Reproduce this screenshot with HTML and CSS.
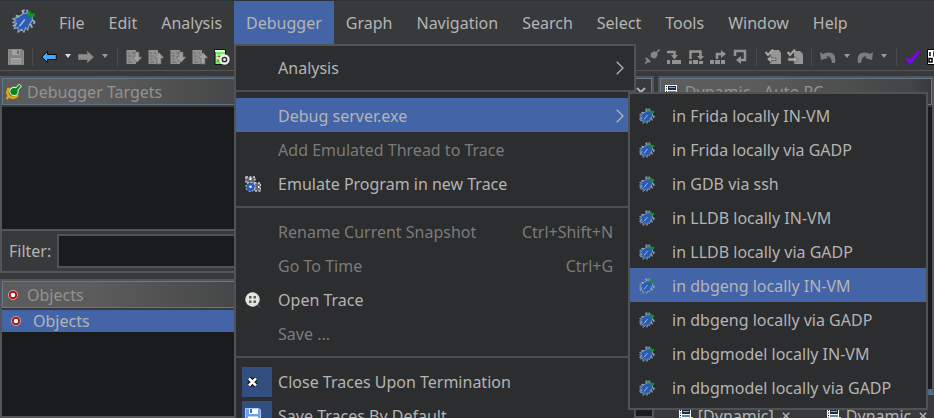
FILE: index.html
```html
<!DOCTYPE html>
<html lang="en">
<head>
<meta charset="utf-8">
<title>Debugger</title>
<link rel="stylesheet" href="styles.css">
</head>
<body>
<svg class="sprite" aria-hidden="true">
  <symbol id="bug" viewBox="0 0 16 16">
    <path d="M5 5 L2.500 4.500 M8 4 L7 1.300 L8.500 0.800 M10.500 3 L10 0.500 M13 7 L15 8.500 L14.500 10 M12 9.500 L13.500 12.500 M3 10 L0.500 11.500" fill="none" stroke="#93a8c4" stroke-width="1.300"/>
    <path d="M0.500 6.500 L4 5.500 L7.500 3 L11 2.500 L13.500 4.500 L13.500 7.500 L11.500 10.500 L10.500 14 L9 12.500 L8 15.500 L6.500 13.500 L4 15.500 L4 12.500 L1.500 13 L3 9.500 L0.500 9 L2.500 7.500 Z" fill="#2a5db2" stroke="#93a8c4" stroke-width="0.700"/>
    <path d="M8.500 7 L5 11.500" stroke="#a9bfe2" stroke-width="0.900"/>
    <path d="M10.500 1.500 H12.500 V3 H15.200 V5 H13.500 V6 H12 V4.500 H10.500 Z" fill="#0b9a18"/>
  </symbol>
  <symbol id="disk" viewBox="0 0 16 16">
    <path d="M0.500 0.500 H14 L15.500 2 V15.500 H0.500 Z" fill="#858585" stroke="#8d8d8d"/>
    <path d="M4 1 H12 V6 H4 Z M3 9 H13 V15 H3 Z" fill="#a2a2a2"/>
    <path d="M9 1.500 H11 V5 H9 Z" fill="#6e6e6e"/><path d="M4 11.500 H12 M4 13.500 H12" stroke="#8c8c8c"/>
  </symbol>
  <symbol id="disk-blue" viewBox="0 0 16 16">
    <path d="M0.500 0.500 H14 L15.500 2 V15.500 H0.500 Z" fill="#6da0ec" stroke="#a9c8f8"/>
    <path d="M4 1 H13 V6 H4 Z M3 9 H13 V15 H3 Z" fill="#fff"/><path d="M5 1 H7 V5 H5 Z" fill="#3b6fc4"/><path d="M3 8.500 H13" stroke="#b9d2fa"/>
  </symbol>
  <symbol id="back" viewBox="0 0 16 16"><path d="M0.700 8 L6.500 2.500 V5.500 H15.300 V10.500 H6.500 V13.500 Z" fill="#46a9f8" stroke="#0a0a0a"/></symbol>
  <symbol id="forward" viewBox="0 0 16 16"><path d="M15.500 8 L9.500 2.500 V5.500 H0.500 V10.500 H9.500 V13.500 Z" fill="#8d8d8d" stroke="#787878"/></symbol>
  <symbol id="page-down" viewBox="0 0 16 16">
    <path d="M0.500 1 H10 V15 H0.500 Z" fill="#919191"/><path d="M2 4 H4 M6 4 H9 M2 7 H5 M2 10 H4 M2 13 H6" stroke="#686868"/>
    <path d="M9 3 H13 V8 H16 L11 13.500 L6 8 H9 Z" fill="#a0a0a0" stroke="#6c6c6c" stroke-width="0.700"/>
  </symbol>
  <symbol id="page-up" viewBox="0 0 16 16">
    <path d="M0.500 1 H10 V15 H0.500 Z" fill="#919191"/><path d="M2 4 H4 M6 4 H8 M2 7 H5 M2 10 H4 M2 13 H6" stroke="#686868"/>
    <path d="M9 15 H13 V9 H16 L11 3.500 L6 9 H9 Z" fill="#a0a0a0" stroke="#6c6c6c" stroke-width="0.700"/>
  </symbol>
  <symbol id="page-rec" viewBox="0 0 16 16">
    <path d="M1 0.500 H11.500 V15.500 H1 Z" fill="#71ee66" stroke="#111"/><path d="M1 1 H11 V3 H1 Z" fill="#d8ffd0"/>
    <path d="M2 6 H4 M6 6 H10 M2 9 H5" stroke="#fff"/><path d="M4 7.500 H6 M3 12 H5" stroke="#d22"/>
    <circle cx="10.500" cy="10.500" r="4" fill="#222" stroke="#eee" stroke-width="2.300"/><circle cx="10.500" cy="10.500" r="1.600" fill="#ddd"/>
  </symbol>
  <symbol id="plug" viewBox="0 0 16 16">
    <path d="M7 4 L10.500 2 L14 5 L12 9 L9 9.500 L6.500 7.500 Z" fill="#858585"/><path d="M12 4 L15.500 0.500" stroke="#858585" stroke-width="1.500"/>
    <path d="M1 8.500 L3.500 9 L6.500 12 L6 14 L4 13 L2 15 L0.500 14 L2.500 12 Z" fill="#858585"/>
  </symbol>
  <symbol id="step-into" viewBox="0 0 16 16"><path d="M1 3 H8.500 V8" fill="none" stroke="#929292" stroke-width="2.500"/><path d="M5 6 H12 L8.500 10.500 Z M1 11 H4 V15 H1 Z M6 11 H15 V15 H6 Z" fill="#929292"/></symbol>
  <symbol id="step-over" viewBox="0 0 16 16"><path d="M2.500 10 V2.500 H12.500 V7" fill="none" stroke="#929292" stroke-width="2.500"/><path d="M9 7 H16 L12.500 11 Z M1 11.500 H4 V15 H1 Z M5 11 H10 V15 H5 Z M11 12 H15 V15 H11 Z" fill="#929292"/></symbol>
  <symbol id="step-out" viewBox="0 0 16 16"><path d="M7 10 V5 H12" fill="none" stroke="#929292" stroke-width="2.500"/><path d="M11 1 L16 5 L11 9 Z M0 11 H4 V15 H0 Z M5 11 H10 V15 H5 Z M11 11 H15 V15 H11 Z" fill="#929292"/></symbol>
  <symbol id="step-last" viewBox="0 0 16 16"><path d="M3 7 V2 H13 V11 H8" fill="none" stroke="#929292" stroke-width="2.500"/><path d="M9 7 V15 L4 11 Z" fill="#929292"/></symbol>
  <symbol id="copy-in" viewBox="0 0 16 16"><path d="M6 1 H14 L16 4 V15 H5 V8 Z" fill="#969696"/><path d="M0.500 3 L3 6 L8 0.500" stroke="#a8a8a8" stroke-width="2" fill="none"/><path d="M2 10 L6 6.500 V9 H11 V11.500 H6 V14 Z" fill="#aaa" stroke="#555" stroke-width="0.700"/></symbol>
  <symbol id="copy-out" viewBox="0 0 16 16"><path d="M7 2 H13 L16 5 V15 H7 Z" fill="#969696"/><path d="M0.500 3 L3 6 L8 0.500" stroke="#a8a8a8" stroke-width="2" fill="none"/><path d="M11 10.500 L7 7 V9 H1 V12 H7 V14.500 Z" fill="#aaa" stroke="#555" stroke-width="0.700"/></symbol>
  <symbol id="undo" viewBox="0 0 16 16"><path d="M0 3 L1 11 L8 9 L6 7.500 Q11 6 12 14 H15 Q17 3 8 3.500 Q5 3.500 3 5 Z" fill="#7d7d7d"/></symbol>
  <symbol id="redo" viewBox="0 0 16 16"><path d="M16 3 L15 11 L8 9 L10 7.500 Q5 6 4 14 H1 Q-1 3 8 3.500 Q11 3.500 13 5 Z" fill="#7d7d7d"/></symbol>
  <symbol id="check" viewBox="0 0 16 16"><path d="M2 9 L5 13.500 L14 2" stroke="#8200ff" stroke-width="2.800" fill="none"/></symbol>
  <symbol id="bits" viewBox="0 0 16 16"><path d="M0.500 0.500 H15.500 V15.500 H0.500 Z" fill="#fff" stroke="#000"/><path d="M3 3 V7 M2 9.500 H5 V13 H2 Z M7 3 H10 V7 H7 Z M8 9 V13" stroke="#000" stroke-width="1.500" fill="none"/></symbol>
  <symbol id="target" viewBox="0 0 16 16">
    <path d="M3 5 Q-0.500 9 3.500 12.500 Q8 16 12 11 M3 12 L0.500 15 M1 5 L4 5" fill="none" stroke="#dca816" stroke-width="2.500"/>
    <circle cx="8" cy="7.500" r="4.700" fill="#d8f1d2"/><path d="M9 7 L14.500 1" stroke="#d8f1d2" stroke-width="4"/><circle cx="8" cy="7.500" r="3.600" fill="#078516"/><path d="M8 8 L14 1.500" stroke="#078516" stroke-width="2"/>
  </symbol>
  <symbol id="object" viewBox="0 0 10 10"><circle cx="5" cy="5" r="3.300" fill="#fff" stroke="#b50b0b" stroke-width="2"/><circle cx="5" cy="5" r="4.600" fill="none" stroke="#e5c9c9" stroke-width="0.700"/></symbol>
  <symbol id="listing" viewBox="0 0 16 16"><path d="M1 1 H13 V15 H1 Z" fill="#f2f5f5"/><path d="M2.500 2 V14" stroke="#222" stroke-dasharray="1 1.500"/><path d="M4 2 H12 V6 H4 Z" fill="#182c47"/><path d="M5 3.500 H11" stroke="#7db0d5"/><path d="M4 8 H12 M4 11 H12" stroke="#32657e" stroke-width="1.500"/><path d="M11 9 H15 V13 H11 Z" fill="#e7d89e"/></symbol>
  <symbol id="emulate" viewBox="0 0 16 16">
    <path d="M0.500 1 H10 V7 H0.500 Z" fill="#666"/><path d="M1 1 H10 V7 H1 Z M9.500 7 H15.500 V15 H9.500 Z" fill="#666" stroke="#d4d4d4" stroke-width="1.300" stroke-dasharray="2 1.500"/>
    <circle cx="5.500" cy="10.800" r="4.600" fill="#2a5ab2" stroke="#c4d6ff" stroke-dasharray="2 1.500"/><circle cx="5.500" cy="10.800" r="1.300" fill="#fff"/><path d="M4.500 2 H6.500 V4 H4.500 Z M13 10 H14.500 V12 H13 Z" fill="#fff"/>
  </symbol>
  <symbol id="reel" viewBox="0 0 16 16"><path d="M11 12 L15.500 15.500" stroke="#444" stroke-width="2"/><circle cx="7.500" cy="7.500" r="7.200" fill="#e3e6df"/><path d="M4 4 H6.500 V6.500 H4 Z M8.500 4 H11 V6.500 H8.500 Z M4 8.500 H6.500 V11 H4 Z M8.500 8.500 H11 V11 H8.500 Z" fill="#5a5e58"/></symbol>
  <symbol id="cross" viewBox="0 0 16 16"><path d="M4 4.500 L11 11.500 M11 4.500 L4 11.500" stroke="#111" stroke-width="5"/><path d="M4 4.500 L11 11.500 M11 4.500 L4 11.500" stroke="#fff" stroke-width="2.600"/></symbol>
  <symbol id="chevron" viewBox="0 0 8 14"><path d="M0.700 0.700 L7 7 L0.700 13.300" fill="none" stroke="currentColor" stroke-width="1.300"/></symbol>
  <symbol id="close" viewBox="0 0 10 10"><path d="M1 1 L9 9 M9 1 L1 9" stroke="#b4b4b4" stroke-width="1.800"/></symbol>
</svg>

<nav class="menubar" aria-label="Main menu">
  <svg class="app-icon"><use href="#bug"/></svg>
  <button class="menu-title">File</button>
  <button class="menu-title">Edit</button>
  <button class="menu-title">Analysis</button>
  <div class="menu-host">
    <button class="menu-title open" aria-expanded="true">Debugger</button>
    <div class="menu dropdown" role="menu">
      <button class="item" role="menuitem"><span class="slot"></span><span class="label">Analysis</span><svg class="chevron"><use href="#chevron"/></svg></button>
      <hr>
      <div class="submenu-host">
        <button class="item selected" role="menuitem" aria-expanded="true"><span class="slot"></span><span class="label">Debug server.exe</span><svg class="chevron"><use href="#chevron"/></svg></button>
        <div class="menu submenu" role="menu">
          <button class="item" role="menuitem"><svg class="icon"><use href="#bug"/></svg><span class="label">in Frida locally IN-VM</span></button>
          <button class="item" role="menuitem"><svg class="icon"><use href="#bug"/></svg><span class="label">in Frida locally via GADP</span></button>
          <button class="item" role="menuitem"><svg class="icon"><use href="#bug"/></svg><span class="label">in GDB via ssh</span></button>
          <button class="item" role="menuitem"><svg class="icon"><use href="#bug"/></svg><span class="label">in LLDB locally IN-VM</span></button>
          <button class="item" role="menuitem"><svg class="icon"><use href="#bug"/></svg><span class="label">in LLDB locally via GADP</span></button>
          <button class="item selected" role="menuitem"><svg class="icon"><use href="#bug"/></svg><span class="label">in dbgeng locally IN-VM</span></button>
          <button class="item" role="menuitem"><svg class="icon"><use href="#bug"/></svg><span class="label">in dbgeng locally via GADP</span></button>
          <button class="item" role="menuitem"><svg class="icon"><use href="#bug"/></svg><span class="label">in dbgmodel locally IN-VM</span></button>
          <button class="item" role="menuitem"><svg class="icon"><use href="#bug"/></svg><span class="label">in dbgmodel locally via GADP</span></button>
        </div>
      </div>
      <button class="item" role="menuitem" disabled><span class="slot"></span><span class="label">Add Emulated Thread to Trace</span></button>
      <button class="item" role="menuitem"><span class="slot"><svg class="icon"><use href="#emulate"/></svg></span><span class="label">Emulate Program in new Trace</span></button>
      <hr>
      <button class="item" role="menuitem" disabled><span class="slot"></span><span class="label">Rename Current Snapshot</span><span class="keys">Ctrl+Shift+N</span></button>
      <button class="item" role="menuitem" disabled><span class="slot"></span><span class="label">Go To Time</span><span class="keys">Ctrl+G</span></button>
      <button class="item" role="menuitem"><span class="slot"><svg class="icon"><use href="#reel"/></svg></span><span class="label">Open Trace</span></button>
      <button class="item" role="menuitem" disabled><span class="slot"></span><span class="label">Save ...</span></button>
      <hr>
      <button class="item" role="menuitemcheckbox" aria-checked="true"><span class="slot checked"><svg class="icon"><use href="#cross"/></svg></span><span class="label">Close Traces Upon Termination</span></button>
      <button class="item" role="menuitemcheckbox" aria-checked="true"><span class="slot checked"><svg class="icon"><use href="#disk-blue"/></svg></span><span class="label">Save Traces By Default</span></button>
    </div>
  </div>
  <button class="menu-title">Graph</button>
  <button class="menu-title">Navigation</button>
  <button class="menu-title">Search</button>
  <button class="menu-title">Select</button>
  <button class="menu-title">Tools</button>
  <button class="menu-title">Window</button>
  <button class="menu-title">Help</button>
</nav>

<div class="toolbar" role="toolbar" aria-label="Tools">
  <div class="tools">
    <button class="tool" aria-label="Save"><svg class="icon"><use href="#disk"/></svg></button>
    <span class="divider"></span>
    <button class="tool" aria-label="Back"><svg class="icon"><use href="#back"/></svg><span class="caret lit"></span></button>
    <button class="tool" aria-label="Forward"><svg class="icon"><use href="#forward"/></svg><span class="caret"></span></button>
    <span class="divider"></span>
    <button class="tool" aria-label="Next page"><svg class="icon"><use href="#page-down"/></svg></button>
    <button class="tool" aria-label="Previous page"><svg class="icon"><use href="#page-up"/></svg></button>
    <button class="tool" aria-label="Import"><svg class="icon"><use href="#page-down"/></svg></button>
    <button class="tool" aria-label="Export"><svg class="icon"><use href="#page-up"/></svg></button>
    <button class="tool" aria-label="Record"><svg class="icon"><use href="#page-rec"/></svg></button>
  </div>
  <div class="tools">
    <button class="tool" aria-label="Disconnect"><svg class="icon"><use href="#plug"/></svg></button>
    <button class="tool" aria-label="Step into"><svg class="icon"><use href="#step-into"/></svg></button>
    <button class="tool" aria-label="Step over"><svg class="icon"><use href="#step-over"/></svg></button>
    <button class="tool" aria-label="Step out"><svg class="icon"><use href="#step-out"/></svg></button>
    <button class="tool" aria-label="Step last"><svg class="icon"><use href="#step-last"/></svg></button>
    <span class="divider"></span>
    <button class="tool" aria-label="Copy in"><svg class="icon"><use href="#copy-in"/></svg></button>
    <button class="tool" aria-label="Copy out"><svg class="icon"><use href="#copy-out"/></svg></button>
    <span class="divider"></span>
    <button class="tool" aria-label="Undo"><svg class="icon"><use href="#undo"/></svg><span class="caret"></span></button>
    <button class="tool" aria-label="Redo"><svg class="icon"><use href="#redo"/></svg><span class="caret"></span></button>
    <span class="divider"></span>
    <button class="tool" aria-label="Validate"><svg class="icon"><use href="#check"/></svg></button>
    <button class="tool" aria-label="Bytes"><svg class="icon"><use href="#bits"/></svg></button>
  </div>
</div>

<main class="workspace">
  <div class="left">
    <section class="panel targets">
      <header class="panel-head"><svg class="icon"><use href="#target"/></svg><h2>Debugger Targets</h2><button class="close" aria-label="Close"><svg><use href="#close"/></svg></button></header>
      <div class="panel-body"></div>
      <div class="filter"><label for="filter">Filter:</label><input id="filter" type="text"></div>
    </section>
    <section class="panel objects">
      <header class="panel-head"><svg class="dot"><use href="#object"/></svg><h2>Objects</h2></header>
      <div class="panel-body"><div class="tree-row"><svg class="dot"><use href="#object"/></svg><span>Objects</span></div></div>
    </section>
  </div>
  <div class="right">
    <section class="panel dynamic">
      <header class="panel-head"><svg class="icon"><use href="#listing"/></svg><h2>Dynamic - Auto PC</h2></header>
      <div class="panel-body"></div>
    </section>
    <div class="tabs">
      <button class="tab"><svg class="icon"><use href="#listing"/></svg><span>[Dynamic]</span><svg class="tab-close"><use href="#close"/></svg></button>
      <button class="tab"><svg class="icon"><use href="#listing"/></svg><span>Dynamic</span><svg class="tab-close"><use href="#close"/></svg></button>
    </div>
  </div>
</main>
</body>
</html>
```
FILE: styles.css
```css
* { box-sizing: border-box; }

body {
  margin: 0;
  height: 100vh;
  overflow: hidden;
  display: flex;
  flex-direction: column;
  background: #37393b;
  color: #b4b4b4;
  font: 16px/24px "Noto Sans", sans-serif;
}

button {
  margin: 0;
  padding: 0;
  border: 0;
  background: none;
  color: inherit;
  font: inherit;
  text-align: left;
}

.sprite { display: none; }
.icon { width: 16px; height: 16px; flex: none; }

.menubar {
  display: flex;
  flex: none;
  height: 44px;
  padding-left: 12px;
  border-top: 1px solid #2c343b;
}
.app-icon { width: 24px; height: 24px; flex: none; margin: 8px 11px 0 0; }
.menu-title { height: 43px; padding: 0 12px; flex: none; }
.menu-title.open { background: #4464a8; }
.menu-host, .submenu-host { position: relative; }

.menu {
  position: absolute;
  z-index: 2;
  padding: 4px 0;
  border: 2px solid #505354;
  background: #2b2d2e;
}
.dropdown { top: 43px; left: 0; width: 402px; }
.submenu { top: -6px; left: 392px; width: 300px; z-index: 3; }

.item {
  display: flex;
  align-items: center;
  width: 100%;
  height: 34px;
  padding: 2px 8px 0 6px;
}
.item:disabled { color: #7b7b7b; }
.item.selected { background: #4464a8; }
.label { flex: 1; white-space: nowrap; }
.slot {
  display: flex;
  align-items: center;
  width: 30px;
  height: 30px;
  margin-right: 6px;
  padding-left: 3px;
}
.slot.checked { background: #334f82; }
.keys { padding-right: 13px; }
.chevron { width: 8px; height: 14px; margin-right: 2px; }
.submenu .item { padding-left: 9px; }
.submenu .icon { margin-right: 17px; }

hr {
  height: 2px;
  margin: 6px 0;
  border: 0;
  background: #4b4d4f;
}

.toolbar {
  display: flex;
  flex: none;
  gap: 414px;
  height: 27px;
  padding: 0 8px;
  border-bottom: 1px solid #535557;
}
.tools { display: flex; align-items: center; gap: 6px; flex: none; }
.tool { display: flex; align-items: center; height: 26px; }
.divider { width: 1px; height: 18px; margin: 0 2px; background: #484a4c; }
.caret {
  width: 6px;
  margin: 0 1px 2px 8px;
  border: 3px solid transparent;
  border-top: 4px solid #999;
  border-bottom: 0;
}
.caret.lit { border-top-color: #ddd; }

.workspace { display: flex; flex: 1; gap: 4px; min-height: 0; padding-top: 5px; }
.left { display: flex; flex-direction: column; width: 70%; gap: 6px; }
.right { display: flex; flex-direction: column; flex: 1; min-width: 0; }

.panel { display: flex; flex-direction: column; border: 2px solid #525658; }
.panel-head {
  display: flex;
  align-items: center;
  flex: none;
  height: 27px;
  padding: 0 5px 0 3px;
  border: 1px solid #65788b;
  background: linear-gradient(90deg, #5c5c5c 0, #5c5c5c 90px, #434445 250px, #37393b 100%);
  color: #929292;
}
h2 { margin: 0; font: inherit; flex: 1; padding-left: 5px; }
.close { display: flex; }
.close svg { width: 10px; height: 10px; }
.panel-body { flex: 1; margin-top: 2px; background: #1a1b1c; }

.targets { height: 197px; flex: none; }
.objects { flex: 1; }
.filter {
  display: flex;
  align-items: center;
  flex: none;
  gap: 6px;
  height: 42px;
  padding: 0 7px;
  border-top: 2px solid #525658;
}
.filter input {
  flex: 1;
  height: 34px;
  border: 2px solid #505254;
  background: #1a1b1c;
  color: inherit;
  font: inherit;
}
.dot { width: 10px; height: 10px; flex: none; }
.objects h2 { padding-left: 9px; }
.objects .dot { margin-left: 2px; }
.tree-row {
  display: flex;
  align-items: center;
  gap: 12px;
  height: 22px;
  padding-left: 7px;
  background: #4464a8;
}

.dynamic { flex: 1; border-bottom: 6px solid #4d6c90; }
.tabs { display: flex; flex: none; gap: 36px; height: 23px; padding: 10px 20px 0; overflow: hidden; }
.tab { display: flex; align-items: center; flex: none; height: 22px; }
.tab span { padding: 0 8px 0 4px; }
.tab-close { width: 8px; height: 8px; }
```
